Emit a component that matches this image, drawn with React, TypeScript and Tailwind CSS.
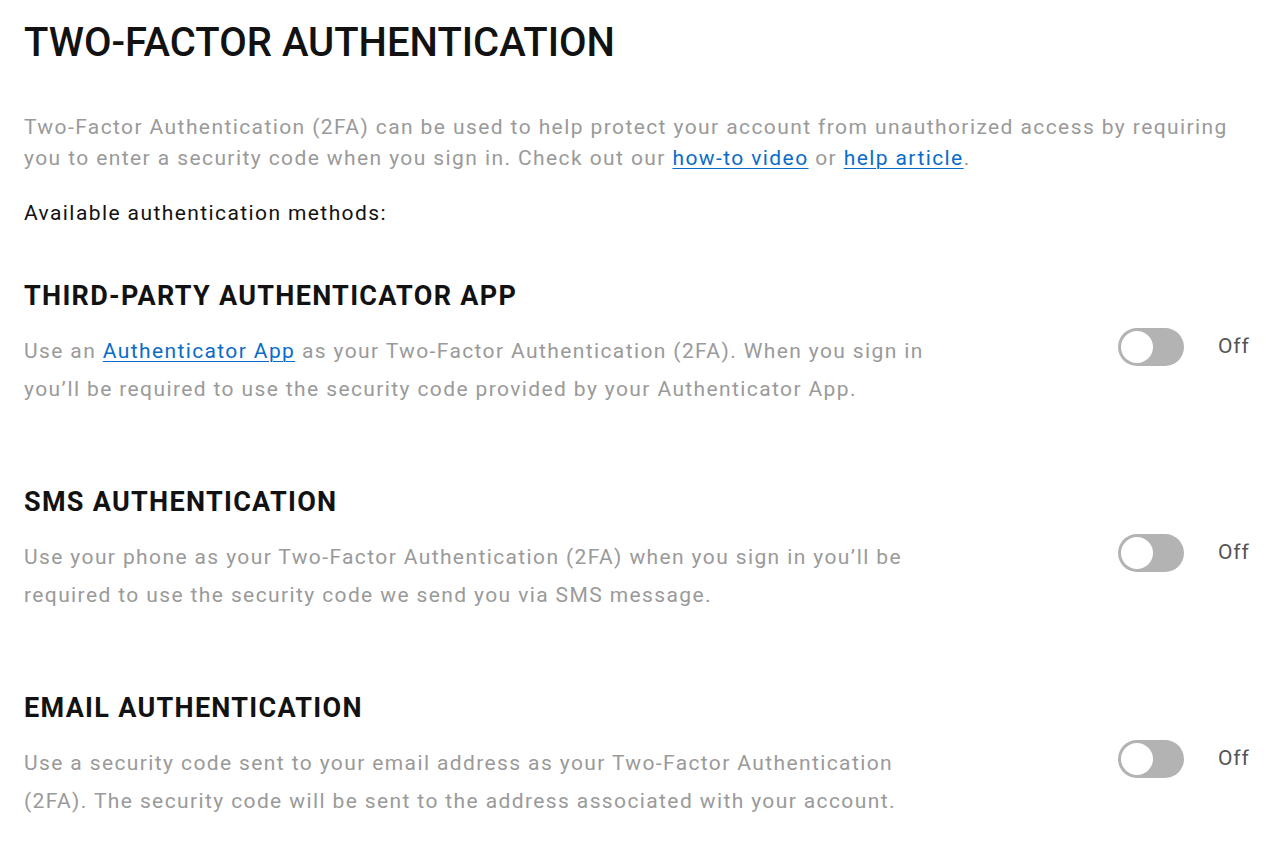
import { useState } from "react";

type Method = {
  id: string;
  title: string;
  body: React.ReactNode;
};

function Toggle({ on, onChange }: { on: boolean; onChange: () => void }) {
  return (
    <div className="flex items-center gap-[34px]">
      <button
        onClick={onChange}
        className={`relative h-[38px] w-[66px] rounded-full transition-colors ${on ? "bg-[#0078f2]" : "bg-[#b3b3b3]"}`}
      >
        <span
          className={`absolute top-[3px] h-[32px] w-[32px] rounded-full bg-white transition-all ${on ? "left-[31px]" : "left-[3px]"}`}
        ></span>
      </button>
      <span className="w-[32px] text-[21px] text-[#555555] tracking-[0.04em]">{on ? "On" : "Off"}</span>
    </div>
  );
}

const link = "text-[#0a6cc9] underline underline-offset-[3px] decoration-1";

export default function App() {
  const [state, setState] = useState<Record<string, boolean>>({});

  const methods: Method[] = [
    {
      id: "app",
      title: "THIRD-PARTY AUTHENTICATOR APP",
      body: (
        <>
          Use an <a className={link}>Authenticator App</a> as your Two-Factor Authentication (2FA). When you sign in
          <br />
          you’ll be required to use the security code provided by your Authenticator App.
        </>
      ),
    },
    {
      id: "sms",
      title: "SMS AUTHENTICATION",
      body: (
        <>
          Use your phone as your Two-Factor Authentication (2FA) when you sign in you’ll be
          <br />
          required to use the security code we send you via SMS message.
        </>
      ),
    },
    {
      id: "email",
      title: "EMAIL AUTHENTICATION",
      body: (
        <>
          Use a security code sent to your email address as your Two-Factor Authentication
          <br />
          (2FA). The security code will be sent to the address associated with your account.
        </>
      ),
    },
  ];

  return (
    <div className="min-h-screen bg-white px-6 pt-[19px] font-['Roboto',sans-serif] text-[#121212]">
      <h1 className="text-[40px] font-medium leading-[48px]">TWO-FACTOR AUTHENTICATION</h1>

      <p className="mt-[45px] text-[21px] leading-[31px] text-[#9a9a9a] tracking-[0.067em]">
        Two-Factor Authentication (2FA) can be used to help protect your account from unauthorized access by requiring
        <br />
        you to enter a security code when you sign in. Check out our <a className={link}>how-to video</a> or{" "}
        <a className={link}>help article</a>.
      </p>

      <p className="mt-[24px] text-[21px] leading-[31px] tracking-[0.067em]">Available authentication methods:</p>

      <div className="mt-[51px] flex flex-col gap-[78px]">
        {methods.map((m) => (
          <section key={m.id}>
            <h2 className="text-[27px] font-bold leading-[32px] tracking-[0.048em]">{m.title}</h2>
            <div className="mt-[20px] flex items-start justify-between pr-[6px]">
              <p className="text-[21px] leading-[38px] text-[#9a9a9a] tracking-[0.066em]">{m.body}</p>
              <div className="mt-[-4px]">
                <Toggle on={!!state[m.id]} onChange={() => setState((s) => ({ ...s, [m.id]: !s[m.id] }))} />
              </div>
            </div>
          </section>
        ))}
      </div>
    </div>
  );
}
